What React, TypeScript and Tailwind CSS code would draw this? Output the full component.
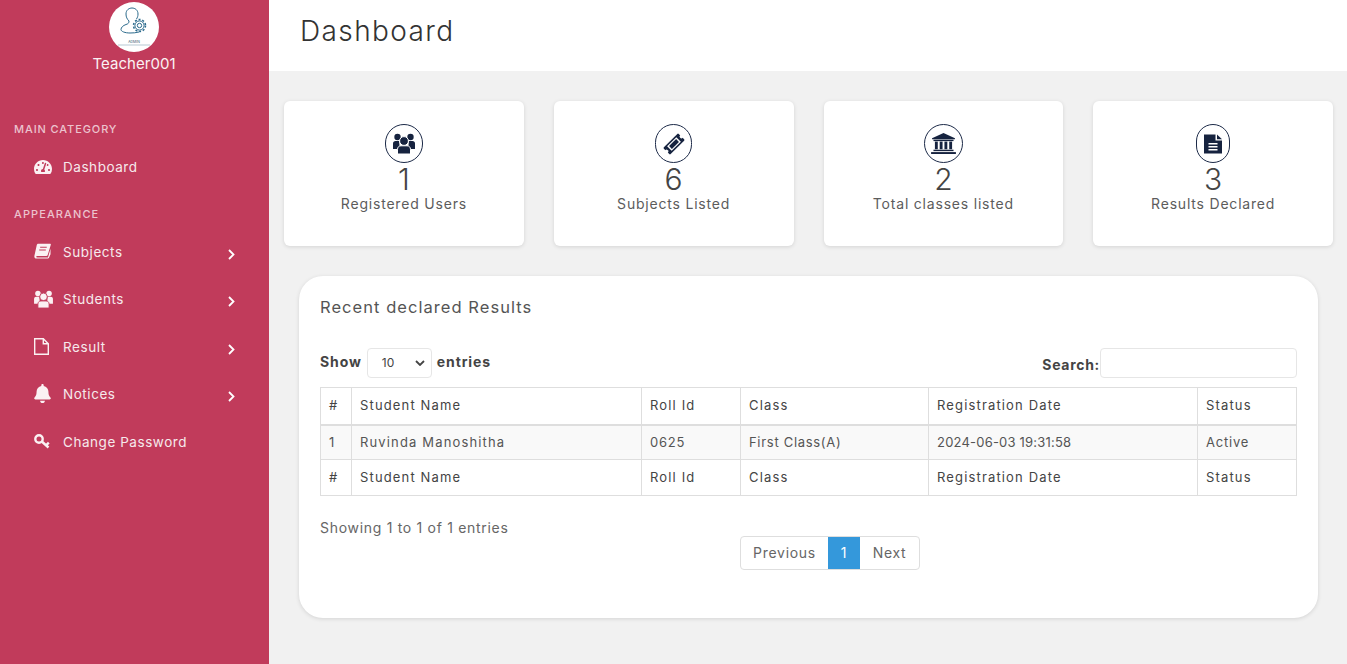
import type { ReactNode } from "react"
import { FaBell, FaTachometerAlt } from "react-icons/fa"

function UsersIcon({ halo, className }: { halo: string; className: string }) {
  return (
    <svg viewBox="0 0 22 21" className={className} fill="currentColor">
      <circle cx="4.500" cy="4" r="3.200" />
      <circle cx="17.500" cy="4" r="3.200" />
      <path d="M0 16V10.500C0 9 1 8 2.500 8H6L7 16Z" />
      <path d="M22 16V10.500C22 9 21 8 19.500 8H16L15 16Z" />
      <circle cx="11" cy="8" r="4.400" stroke={halo} strokeWidth="1" />
      <path d="M4.500 21V16.500C4.500 14 6 12.800 8 12.800H14C16 12.800 17.500 14 17.500 16.500V21Z" stroke={halo} strokeWidth="1" />
    </svg>
  )
}

function BookIcon({ className }: { className: string }) {
  return (
    <svg viewBox="0 0 18 16" className={className} fill="currentColor">
      <path d="M4.500 0.300H17.200C17.800 0.300 18 0.800 17.800 1.500L14.500 12.300C14.300 13 13.800 13.300 13 13.300H3.300C2 13.300 2 14.800 3.300 14.800H14.800L17.500 5.500V11.500L15.700 15.500C15.500 15.800 15.200 16 14.800 16H2.500C0.800 16 0 14.500 0.500 12.700L3 1.500C3.200 0.800 3.800 0.300 4.500 0.300Z" />
      <path d="M6.500 4H13.500M5.500 7H12.500" stroke="#c13b5b" strokeWidth="1.200" />
    </svg>
  )
}

function FileOutlineIcon({ className }: { className: string }) {
  return (
    <svg viewBox="0 0 15 17" className={className} fill="none" stroke="currentColor" strokeWidth="1.400">
      <path d="M0.700 0.700H9.300L14.300 5.700V16.300H0.700Z" />
      <path d="M9.300 0.700V5.700H14.300" />
    </svg>
  )
}

function KeyIcon({ className }: { className: string }) {
  return (
    <svg viewBox="0 0 17 15" className={className} fill="none" stroke="currentColor" strokeWidth="2.400">
      <circle cx="5" cy="5" r="3.700" />
      <path d="M7.800 7.500L14.500 13.500M12 11.300L14.800 8.700" />
    </svg>
  )
}

function TicketIcon({ className }: { className: string }) {
  return (
    <svg viewBox="0 0 22 22" className={className}>
      <g transform="rotate(-45 11 11)">
        <rect x="0.500" y="6.200" width="21" height="9.600" rx="1" fill="currentColor" />
        <circle cx="0.500" cy="11" r="1.800" fill="#fff" />
        <circle cx="21.500" cy="11" r="1.800" fill="#fff" />
        <rect x="4.500" y="7.800" width="13" height="6.400" fill="#fff" />
        <rect x="6" y="9" width="10" height="4" fill="currentColor" />
      </g>
    </svg>
  )
}

function BankIcon({ className }: { className: string }) {
  return (
    <svg viewBox="0 0 26 22" className={className} fill="currentColor">
      <path d="M13 0L25 5.500V6.500H1V5.500Z" />
      <rect x="2.500" y="7" width="21" height="1.500" />
      <rect x="4" y="9" width="3" height="8" />
      <rect x="9" y="9" width="3" height="8" />
      <rect x="14" y="9" width="3" height="8" />
      <rect x="19" y="9" width="3" height="8" />
      <rect x="2.500" y="17.500" width="21" height="1.500" />
      <rect x="0" y="20" width="26" height="2" />
    </svg>
  )
}

function DocIcon({ className }: { className: string }) {
  return (
    <svg viewBox="0 0 18 19" className={className} fill="currentColor">
      <path d="M0 0H11.500V6H18V19H0Z" />
      <path d="M13 0L18 4.800H13Z" />
      <path d="M4.500 9.300H13.500M4.500 12.300H13.500M4.500 15.300H13.500" stroke="#fff" strokeWidth="1.500" />
    </svg>
  )
}

const sideItems = [
  { label: "Subjects", icon: <BookIcon className="h-[16px] w-[17px]" />, y: "h-[47px]" },
  { label: "Students", icon: <UsersIcon halo="#c13b5b" className="h-[18px] w-[19px]" />, y: "h-[48px]" },
  { label: "Result", icon: <FileOutlineIcon className="h-[17px] w-[15px]" />, y: "h-[47px]" },
  { label: "Notices", icon: <FaBell className="h-[19px] w-[17px]" />, y: "h-[48px]" },
]

const stats = [
  { value: "1", label: "Registered Users", icon: <UsersIcon halo="#fff" className="h-[21px] w-[22px]" />, w: "w-[38px]" },
  { value: "6", label: "Subjects Listed", icon: <TicketIcon className="h-[22px] w-[22px]" />, w: "w-[37px]" },
  { value: "2", label: "Total classes listed", icon: <BankIcon className="h-[21px] w-[25px]" />, w: "w-[39px]" },
  { value: "3", label: "Results Declared", icon: <DocIcon className="h-[20px] w-[18px]" />, w: "w-[34px]" },
]

const columns = ["#", "Student Name", "Roll Id", "Class", "Registration Date", "Status"]
const row = [
  { text: "1", tracking: "tracking-[1.15px]" },
  { text: "Ruvinda Manoshitha", tracking: "tracking-[1.15px]" },
  { text: "0625", tracking: "tracking-[0.8px]" },
  { text: "First Class(A)", tracking: "tracking-[0.7px]" },
  { text: "2024-06-03 19:31:58", tracking: "tracking-[0.2px]" },
  { text: "Active", tracking: "tracking-[0.8px]" },
]

function AdminLogo() {
  return (
    <div className="relative h-[50px] w-[50px] rounded-full bg-white">
      <svg viewBox="0 0 50 50" className="h-[50px] w-[50px]" fill="none" stroke="#2b6a8c" strokeWidth="1">
        <path d="M17 12c0-4 3-6 6-6s6 2 6 6c0 2-.5 3.500-1.500 5" />
        <path d="M17 12c0 3 1 5 3 7 0 2-1 3-3 3.500-3 1-5 3-5 5s4 3.500 9 3.500c3 0 6-.2 9-1" />
        <circle cx="30.500" cy="23.500" r="4.600" />
        <circle cx="30.500" cy="23.500" r="2.200" />
        <circle cx="30.500" cy="23.500" r="6" strokeDasharray="2 1.800" strokeWidth="1.500" />
        <path d="M9 43h32" stroke="#b7c9d3" />
      </svg>
      <span className="absolute left-0 right-0 top-[38px] text-center text-[3.500px] leading-[4px] text-[#33566c]">ADMIN</span>
    </div>
  )
}

function SideLink({ icon, label, arrow, className }: { icon: ReactNode; label: string; arrow?: boolean; className: string }) {
  return (
    <div className={`flex items-center pl-[34px] pr-[34px] text-[13.500px] text-[#f6e9ec] ${className}`}>
      <span className="mt-[-2px] flex w-[29px] text-[18px] text-[#fbf1f3]">{icon}</span>
      <span className="tracking-[0.55px]">{label}</span>
      {arrow && (
        <svg viewBox="0 0 7 11" className="ml-auto mt-[4px] h-[11px] w-[7px]" fill="none" stroke="#fff" strokeWidth="1.800">
          <path d="M1 1l4.500 4.500L1 10" />
        </svg>
      )}
    </div>
  )
}

function Sidebar() {
  return (
    <aside className="flex w-[269px] shrink-0 flex-col bg-[#c13b5b]">
      <div className="flex flex-col items-center pr-[1px] pt-[2px]">
        <AdminLogo />
        <div className="mt-[2px] text-[15px] leading-[20px] tracking-[0.05px] text-[#fbf1f3]">Teacher001</div>
      </div>
      <div className="mt-[47px] pl-[14px] text-[11px] font-medium leading-[16px] tracking-[0.9px] text-[#ecc3ce]">MAIN CATEGORY</div>
      <SideLink icon={<FaTachometerAlt />} label="Dashboard" className="mt-[7px] h-[47px]" />
      <div className="mt-[15px] pl-[14px] text-[11px] font-medium leading-[16px] tracking-[1.1px] text-[#ecc3ce]">APPEARANCE</div>
      <div className="mt-[6.500px]">
        {sideItems.map(item => (
          <SideLink key={item.label} icon={item.icon} label={item.label} arrow className={item.y} />
        ))}
        <SideLink icon={<KeyIcon className="h-[15px] w-[17px]" />} label="Change Password" className="h-[47px]" />
      </div>
    </aside>
  )
}

function StatCard({ value, label, icon, w }: { value: string; label: string; icon: ReactNode; w: string }) {
  return (
    <div className="flex h-[145px] flex-col items-center rounded-[6px] bg-white pt-[23px] shadow-[0_1px_4px_rgba(0,0,0,0.12)]">
      <div className={`flex h-[39px] items-center justify-center rounded-full border border-[#1c2a48] text-[#16233f] ${w}`}>{icon}</div>
      <div className="text-[30px] font-light leading-[32px] text-[#444]">{value}</div>
      <div className="text-[14px] leading-[18px] tracking-[0.8px] text-[#5c5c5c]">{label}</div>
    </div>
  )
}

function ResultsTable() {
  const cell = "border border-[#dedede] px-2 text-left text-[13px] font-normal"
  return (
    <table className="mt-[9px] w-full table-fixed border-collapse text-[#444]">
      <colgroup>
        <col className="w-[31px]" />
        <col className="w-[290px]" />
        <col className="w-[99px]" />
        <col className="w-[188px]" />
        <col className="w-[269px]" />
        <col />
      </colgroup>
      <thead>
        <tr className="h-[37px]">
          {columns.map(c => (
            <th key={c} className={`${cell} border-b-2 tracking-[1.15px]`}>{c}</th>
          ))}
        </tr>
      </thead>
      <tbody>
        <tr className="h-[35px] bg-[#f9f9f9]">
          {row.map(c => (
            <td key={c.text} className={`${cell} text-[#555] ${c.tracking}`}>{c.text}</td>
          ))}
        </tr>
      </tbody>
      <tfoot>
        <tr className="h-[36px]">
          {columns.map(c => (
            <th key={c} className={`${cell} tracking-[1.15px]`}>{c}</th>
          ))}
        </tr>
      </tfoot>
    </table>
  )
}

export default function App() {
  return (
    <div className="flex h-[664px] overflow-hidden bg-[#f1f1f1] font-['Inter','Liberation_Sans',sans-serif]">
      <Sidebar />
      <main className="min-w-0 flex-1">
        <header className="flex h-[71px] items-center bg-white pb-[10px] pl-[31px] text-[28px] font-light tracking-[1.4px] text-[#333]">Dashboard</header>
        <div className="grid grid-cols-4 gap-[30px] pl-[15px] pr-[14px] pt-[30px]">
          {stats.map(s => (
            <StatCard key={s.label} {...s} />
          ))}
        </div>
        <section className="ml-[30px] mr-[29px] mt-[30px] h-[342px] rounded-[24px] bg-white px-[21px] pt-[20px] shadow-[0_1px_4px_rgba(0,0,0,0.12)]">
          <h2 className="text-[16.500px] font-normal leading-[22px] tracking-[1.05px] text-[#555]">Recent declared Results</h2>
          <div className="mt-[30px] flex items-start justify-between text-[14px] font-bold text-[#444]">
            <div className="flex items-center tracking-[0.9px]">
              <span className="mb-[3px]">Show</span>
              <div className="ml-[5px] mr-[5px] flex h-[30px] w-[65px] items-center justify-between rounded-[4px] border border-[#e6e6e6] pl-[14px] pr-[6px] text-[12px] font-normal tracking-normal">
                10
                <svg viewBox="0 0 10 6" className="h-[6px] w-[10px]" fill="none" stroke="#444" strokeWidth="1.800"><path d="M1 1l4 4 4-4" /></svg>
              </div>
              <span className="mb-[3px]">entries</span>
            </div>
            <div className="flex items-center">
              <span className="mt-[3px] tracking-[0.7px]">Search:</span>
              <div className="h-[30px] w-[197px] rounded-[4px] border border-[#e6e6e6]" />
            </div>
          </div>
          <ResultsTable />
          <div className="mt-[23px] text-[14px] leading-[18px] tracking-[0.7px] text-[#666]">Showing 1 to 1 of 1 entries</div>
          <div className="mt-[-1px] ml-[420px] flex h-[34px] w-[180px] items-stretch overflow-hidden rounded-[4px] border border-[#dedede] pb-[1px] text-[14px] tracking-[0.7px] text-[#666]">
            <span className="flex w-[87px] items-center justify-center">Previous</span>
            <span className="mb-[-1px] flex w-[32px] items-center justify-center bg-[#3498db] pb-[1px] text-white">1</span>
            <span className="flex flex-1 items-center justify-center">Next</span>
          </div>
        </section>
      </main>
    </div>
  )
}
